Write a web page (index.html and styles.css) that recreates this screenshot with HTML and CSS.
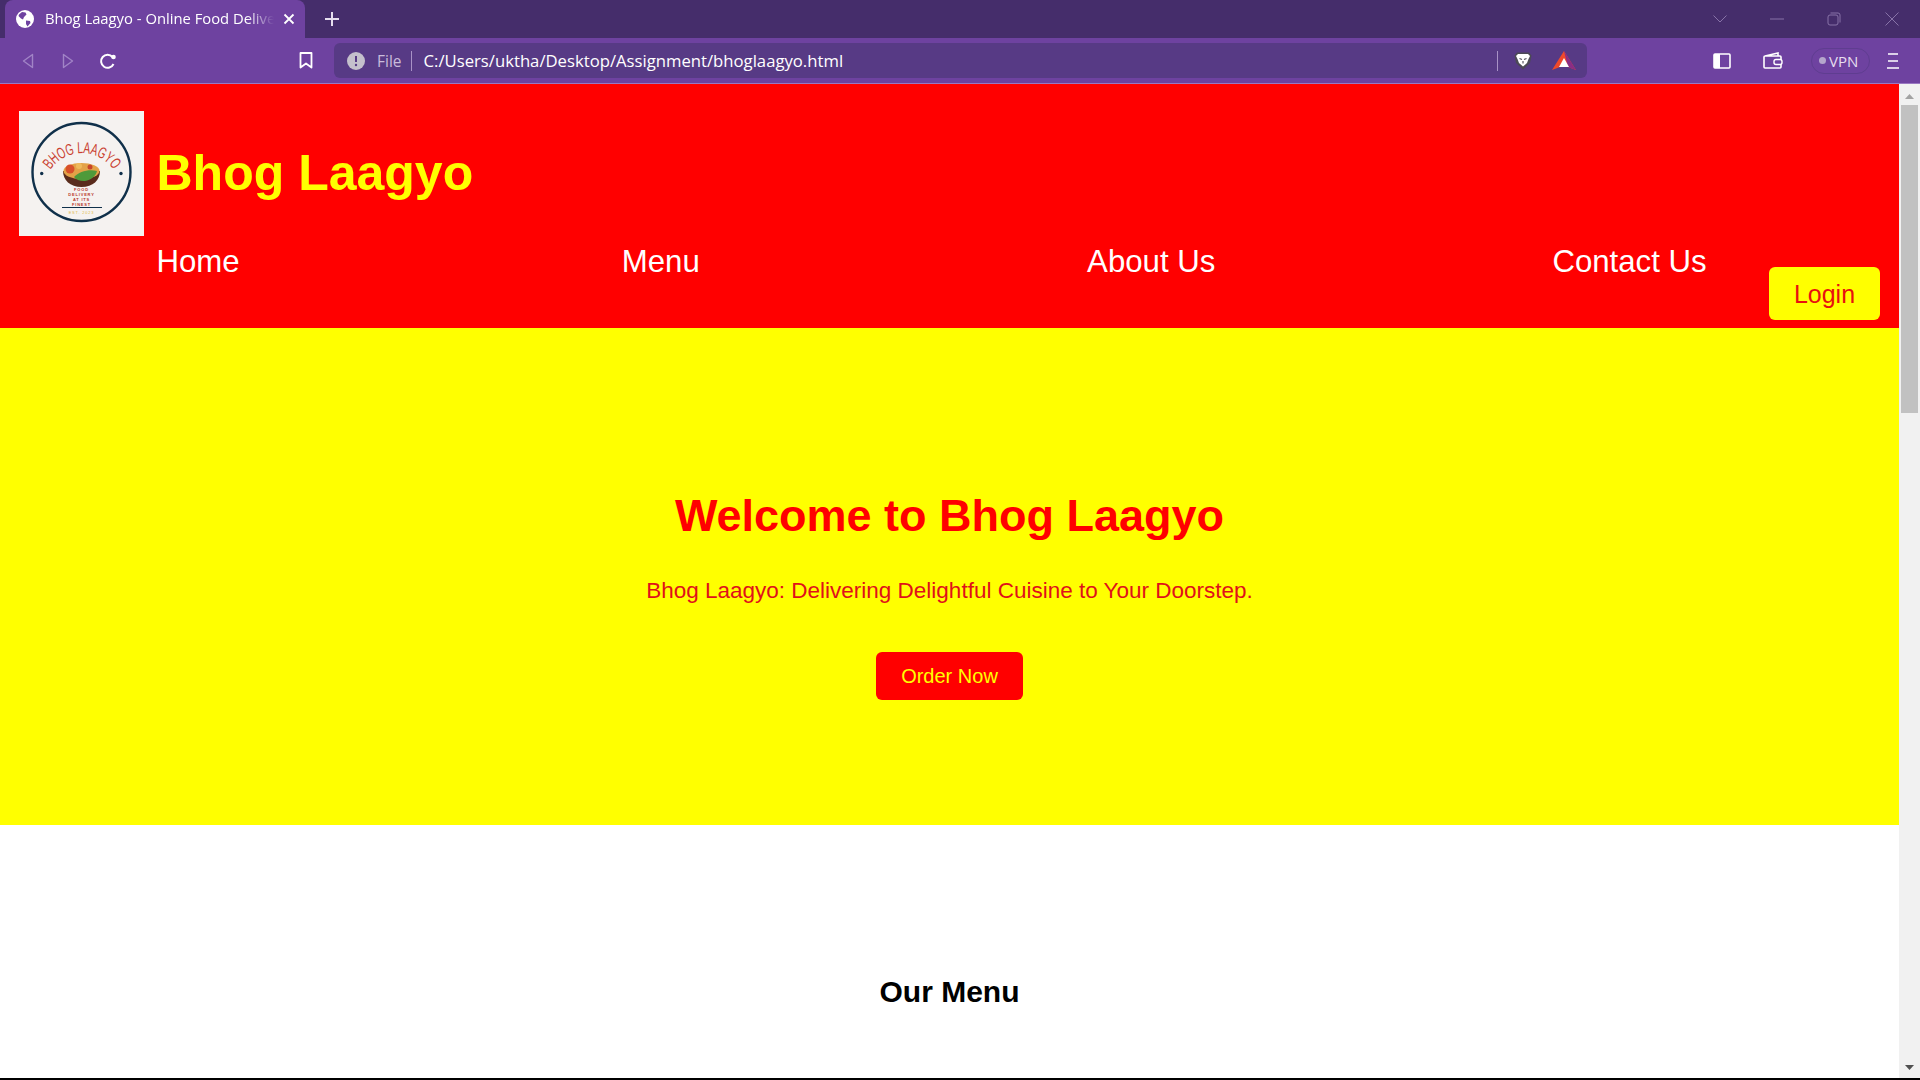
FILE: index.html
```html
<!DOCTYPE html>
<html>

<head>
    <title>Bhog Laagyo - Online Food Delivery</title>
    <link rel="stylesheet" href="styles.css">
</head>

<body>
    <div class="tab-strip">
        <div class="tab">
            <svg class="tab-globe" width="18" height="18" viewBox="0 0 18 18">
                <circle cx="9" cy="9" r="9" fill="#fff"/>
                <path d="M3 4.500l3-2.500 3.500.5 1 2-2.500 2.500-1 2.500-2-1-2.500-2.500zM10 10.500l4 .5 .5 2-3 3.500-1.500-2.500z" fill="#6e42a0"/>
            </svg>
            <span class="tab-title">Bhog Laagyo - Online Food Delivery</span>
            <svg class="tab-close" width="12" height="12" viewBox="0 0 12 12">
                <path d="M1.500 1.500l9 9M10.500 1.500l-9 9" stroke="#fff" stroke-width="1.800"/>
            </svg>
        </div>
        <svg class="new-tab" width="16" height="16" viewBox="0 0 16 16">
            <path d="M8 1v14M1 8h14" stroke="#e6deee" stroke-width="2"/>
        </svg>
        <div class="window-controls">
            <svg width="16" height="10" viewBox="0 0 16 10"><path d="M1.500 1.500l6.500 6.500 6.500-6.500" fill="none" stroke="#8873a8" stroke-width="1"/></svg>
            <svg class="win-min" width="14" height="2" viewBox="0 0 14 2"><path d="M0 1h14" stroke="#8873a8" stroke-width="1"/></svg>
            <svg class="win-max" width="14" height="14" viewBox="0 0 14 14"><rect x="1" y="3" width="10" height="10" rx="2" fill="none" stroke="#8873a8"/><path d="M3.500 1h7.500a2 2 0 0 1 2 2v7.500" fill="none" stroke="#8873a8"/></svg>
            <svg class="win-close" width="14" height="14" viewBox="0 0 14 14"><path d="M.5.500l13 13M13.500.500l-13 13" stroke="#8873a8" stroke-width="1"/></svg>
        </div>
    </div>

    <div class="toolbar">
        <div class="nav-buttons">
            <svg width="14" height="16" viewBox="0 0 14 16"><path d="M11.500 1.500v13l-9-6.500z" fill="none" stroke="#a184c6" stroke-width="1.400" stroke-linejoin="round"/></svg>
            <svg width="14" height="16" viewBox="0 0 14 16"><path d="M2.500 1.500v13l9-6.500z" fill="none" stroke="#a184c6" stroke-width="1.400" stroke-linejoin="round"/></svg>
            <svg class="reload" width="18" height="18" viewBox="0 0 18 18"><path d="M14.500 12a6.500 6.500 0 1 1-1-7" fill="none" stroke="#fff" stroke-width="2"/><circle cx="14.500" cy="5" r="2.300" fill="#fff"/></svg>
        </div>
        <svg class="bookmark" width="14" height="17" viewBox="0 0 14 17"><path d="M1.500 1h11v14.500l-5.500-4-5.500 4z" fill="none" stroke="#fff" stroke-width="1.800" stroke-linejoin="round"/></svg>
        <div class="omnibox">
            <svg width="18" height="18" viewBox="0 0 18 18"><circle cx="9" cy="9" r="9" fill="#c4c0cc"/><path d="M9 4v6" stroke="#573a85" stroke-width="2"/><circle cx="9" cy="13" r="1.200" fill="#573a85"/></svg>
            <span class="omni-file">File</span>
            <span class="omni-sep"></span>
            <span class="omni-url">C:/Users/uktha/Desktop/Assignment/bhoglaagyo.html</span>
            <span class="omni-sep omni-sep-right"></span>
            <svg class="shield" width="18" height="18" viewBox="0 0 18 18"><path d="M3 .5h12l2.500 3-1.500 7.500-7 6.500-7-6.500-1.500-7.500z" fill="#4c4a55"/><path d="M4 2h10l2 2-1.500 3-1.500 4-4 3.500-4-3.500-1.500-4-1.500-3z" fill="#fff"/><path d="M5.500 6.500l2.500 1M12.500 6.500l-2.500 1M9 9v2.500" stroke="#4c4a55" stroke-width="1.100"/></svg>
            <svg class="rewards" width="24" height="20" viewBox="0 0 24 20"><path d="M12 0l12 19-8-3h-8l-8 3z" fill="#f0492a"/><path d="M12 0l12 19-8-3z" fill="#8a2d86"/><path d="M12 7l5 9h-10z" fill="#fff"/></svg>
        </div>
        <div class="toolbar-right">
            <svg width="18" height="16" viewBox="0 0 18 16"><rect x="1" y="1" width="16" height="14" rx="1" fill="none" stroke="#fff" stroke-width="1.600"/><rect x="1" y="1" width="6" height="14" fill="#fff"/></svg>
            <svg class="wallet" width="20" height="17" viewBox="0 0 20 17"><path d="M2 4l13-3v3M1 5a1 1 0 0 1 1-1h15a1 1 0 0 1 1 1v10a1 1 0 0 1-1 1H2a1 1 0 0 1-1-1z" fill="none" stroke="#fff" stroke-width="1.600"/><rect x="11" y="7.500" width="8" height="5" rx="2" fill="#6e42a0" stroke="#fff" stroke-width="1.400"/></svg>
            <div class="vpn"><span class="vpn-dot"></span>VPN</div>
            <svg class="menu-icon" width="12" height="16" viewBox="0 0 12 16"><path d="M1 1h10M1 8h10M0 15h12" stroke="#fff" stroke-width="1.600"/></svg>
        </div>
    </div>

    <div class="viewport">
        <main class="page">
            <header class="site-header">
                <div class="brand">
                    <svg class="logo" width="125" height="125" viewBox="0 0 125 125">
                        <rect width="125" height="125" fill="#f5f2f0"/>
                        <circle cx="62.500" cy="61" r="49" fill="none" stroke="#10304a" stroke-width="2.400"/>
                        <circle cx="22.700" cy="62.500" r="1.700" fill="#10304a"/>
                        <circle cx="102" cy="62.500" r="1.700" fill="#10304a"/>
                        <defs><path id="logo-arc" d="M27 68A38 38 0 0 1 99 68"/></defs>
                        <text class="logo-name"><textPath href="#logo-arc" startOffset="50%" text-anchor="middle" textLength="74" lengthAdjust="spacingAndGlyphs">BHOG LAAGYO</textPath></text>
                        <path d="M44 60h37c0 9-7 16-18.500 16S44 69 44 60z" fill="#5a2c1c"/>
                        <ellipse cx="62.500" cy="60" rx="18" ry="8" fill="#e3a247"/>
                        <circle cx="51" cy="58" r="4.500" fill="#d8502a"/>
                        <circle cx="60" cy="55" r="3" fill="#efb95a"/>
                        <circle cx="71" cy="56" r="2.500" fill="#c8452a"/>
                        <path d="M55 66c5-5 14-8 23-6-1 5-6 9-12 10-4 .5-9-1-11-4z" fill="#4f9a3a"/>
                        <text class="logo-small" x="62.500" y="80">FOOD</text>
                        <text class="logo-small" x="62.500" y="85">DELIVERY</text>
                        <text class="logo-small" x="62.500" y="90">AT ITS</text>
                        <text class="logo-small" x="62.500" y="95">FINEST</text>
                        <path d="M43 96.500h40" stroke="#10304a" stroke-width="1"/>
                        <text class="logo-est" x="62.500" y="103">EST. 2023</text>
                    </svg>
                    <h1 class="site-title">Bhog Laagyo</h1>
                </div>
                <div class="header-row">
                    <nav class="site-nav">
                        <a href="#">Home</a>
                        <a href="#">Menu</a>
                        <a href="#">About Us</a>
                        <a href="#">Contact Us</a>
                    </nav>
                    <button type="button" class="login-btn">Login</button>
                </div>
            </header>

            <section class="hero">
                <h2 class="hero-title">Welcome to Bhog Laagyo</h2>
                <p class="hero-text">Bhog Laagyo: Delivering Delightful Cuisine to Your Doorstep.</p>
                <button type="button" class="order-btn">Order Now</button>
            </section>

            <section class="menu-section">
                <h2 class="menu-title">Our Menu</h2>
            </section>
        </main>
        <div class="scrollbar">
            <svg class="scroll-up" width="21" height="21" viewBox="0 0 21 21"><path d="M6 15l4.500-5 4.500 5z" fill="#a3a3a3"/></svg>
            <div class="scroll-thumb"></div>
            <svg class="scroll-down" width="21" height="17" viewBox="0 0 21 17"><path d="M6 6l4.500 5 4.500-5z" fill="#505050"/></svg>
        </div>
    </div>
    <div class="bottom-edge"></div>
</body>

</html>
```

FILE: styles.css
```css
html, body {
    margin: 0;
    height: 1080px;
    overflow: hidden;
}

body {
    display: flex;
    flex-direction: column;
    font-family: "Liberation Sans", Arial, sans-serif;
    background: #fff;
}

/* browser chrome */
.tab-strip {
    display: flex;
    align-items: center;
    height: 38px;
    padding-left: 5px;
    background: #452d6b;
    font-family: "Open Sans", "Noto Sans", sans-serif;
}

.tab {
    display: flex;
    align-items: center;
    width: 300px;
    height: 38px;
    padding: 0 10px 0 11px;
    box-sizing: border-box;
    background: #6e42a0;
    border-radius: 8px 8px 0 0;
}

.tab-globe {
    flex: none;
}

.tab-title {
    flex: 1;
    margin-left: 11px;
    margin-top: -2px;
    overflow: hidden;
    white-space: nowrap;
    color: #fff;
    font-size: 14.800px;
    font-weight: 500;
    -webkit-mask-image: linear-gradient(to right, #000 88%, transparent 100%);
    mask-image: linear-gradient(to right, #000 88%, transparent 100%);
}

.tab-close {
    flex: none;
    margin-left: 9px;
}

.new-tab {
    margin-left: 19px;
}

.window-controls {
    display: flex;
    align-items: center;
    margin-left: auto;
    padding-right: 21px;
}

.win-min {
    margin-left: 42px;
}

.win-max {
    margin-left: 43px;
}

.win-close {
    margin-left: 44px;
}

.toolbar {
    display: flex;
    align-items: center;
    height: 45px;
    padding-left: 21px;
    background: #6e42a0;
    border-bottom: 1px solid #9a78c2;
    font-family: "Open Sans", "Noto Sans", sans-serif;
}

.nav-buttons {
    display: flex;
    align-items: center;
    gap: 26px;
}

.reload {
    margin-left: -2px;
}

.bookmark {
    margin-left: 182px;
}

.omnibox {
    display: flex;
    align-items: center;
    width: 1253px;
    height: 35px;
    margin-left: 21px;
    padding-left: 13px;
    box-sizing: border-box;
    background: #573a85;
    border-radius: 6px;
}

.omni-file {
    margin-left: 12px;
    color: #c9bcdb;
    font-size: 15.500px;
}

.omni-sep {
    width: 1px;
    height: 20px;
    margin-left: 9px;
    background: #a892c6;
}

.omni-url {
    margin-left: 12px;
    color: #fff;
    font-size: 16.700px;
}

.omni-sep-right {
    margin-left: auto;
}

.shield {
    margin-left: 16px;
}

.rewards {
    margin-left: 20px;
    margin-right: 11px;
}

.toolbar-right {
    display: flex;
    align-items: center;
    margin-left: 126px;
}

.wallet {
    margin-left: 32px;
}

.vpn {
    display: flex;
    align-items: center;
    width: 59px;
    height: 26px;
    margin-left: 28px;
    padding-left: 7px;
    box-sizing: border-box;
    border: 1px solid #5f3d90;
    border-radius: 13px;
    color: #e6deee;
    font-size: 15px;
}

.vpn-dot {
    width: 7px;
    height: 7px;
    margin-right: 3px;
    border-radius: 50%;
    background: #b5a6cc;
}

.menu-icon {
    margin-left: 17px;
}

/* page */
.viewport {
    display: flex;
    flex: 1;
    min-height: 0;
}

.page {
    flex: 1;
    min-width: 0;
    overflow: hidden;
}

.site-header {
    height: 244px;
    padding: 27px 19px 0;
    box-sizing: border-box;
    background: #f00;
}

.brand {
    display: flex;
    align-items: center;
    gap: 12.500px;
}

.logo {
    flex: none;
}

.logo-name {
    fill: #c9402f;
    font-size: 16px;
    font-family: "Liberation Sans", sans-serif;
}

.logo-small {
    fill: #b8352a;
    font-size: 4px;
    font-weight: bold;
    letter-spacing: .8px;
    text-anchor: middle;
}

.logo-est {
    fill: #e0b94a;
    font-size: 4px;
    letter-spacing: .8px;
    text-anchor: middle;
}

.site-title {
    margin: -2px 0 0;
    color: #ff0;
    font-size: 50px;
    font-weight: bold;
}

.header-row {
    display: flex;
    align-items: flex-start;
    padding-left: 137.500px;
}

.site-nav {
    display: grid;
    grid-template-columns: repeat(3, 465.3px) auto;
    margin-top: 8px;
}

.site-nav a {
    color: #fff;
    font-size: 31.200px;
    text-decoration: none;
}

.login-btn {
    width: 111px;
    height: 53px;
    margin: 31px 0 0 auto;
    padding-top: 3px;
    border: none;
    border-radius: 6px;
    background: #ff0;
    color: #e8100f;
    font-family: inherit;
    font-size: 25px;
}

.hero {
    display: flex;
    flex-direction: column;
    align-items: center;
    height: 497px;
    padding-top: 162px;
    box-sizing: border-box;
    background: #ff0;
}

.hero-title {
    margin: 0;
    color: #f00;
    font-size: 45px;
    font-weight: bold;
}

.hero-text {
    margin: 36px 0 0;
    color: #e0101a;
    font-size: 22.500px;
}

.order-btn {
    width: 147px;
    height: 48px;
    margin-top: 48px;
    border: none;
    border-radius: 6px;
    background: #f00;
    color: #ff0;
    font-family: inherit;
    font-size: 20px;
}

.menu-section {
    padding-top: 150px;
    text-align: center;
}

.menu-title {
    margin: 0;
    color: #000;
    font-size: 30px;
    font-weight: bold;
}

.scrollbar {
    display: flex;
    flex-direction: column;
    flex: none;
    width: 21px;
    background: #f1f1f1;
}

.scroll-thumb {
    width: 17px;
    height: 308px;
    margin-left: 2px;
    background: #c1c1c1;
}

.scroll-down {
    margin-top: auto;
    margin-bottom: 2px;
}

.bottom-edge {
    flex: none;
    height: 2px;
    background: #000;
}
```
